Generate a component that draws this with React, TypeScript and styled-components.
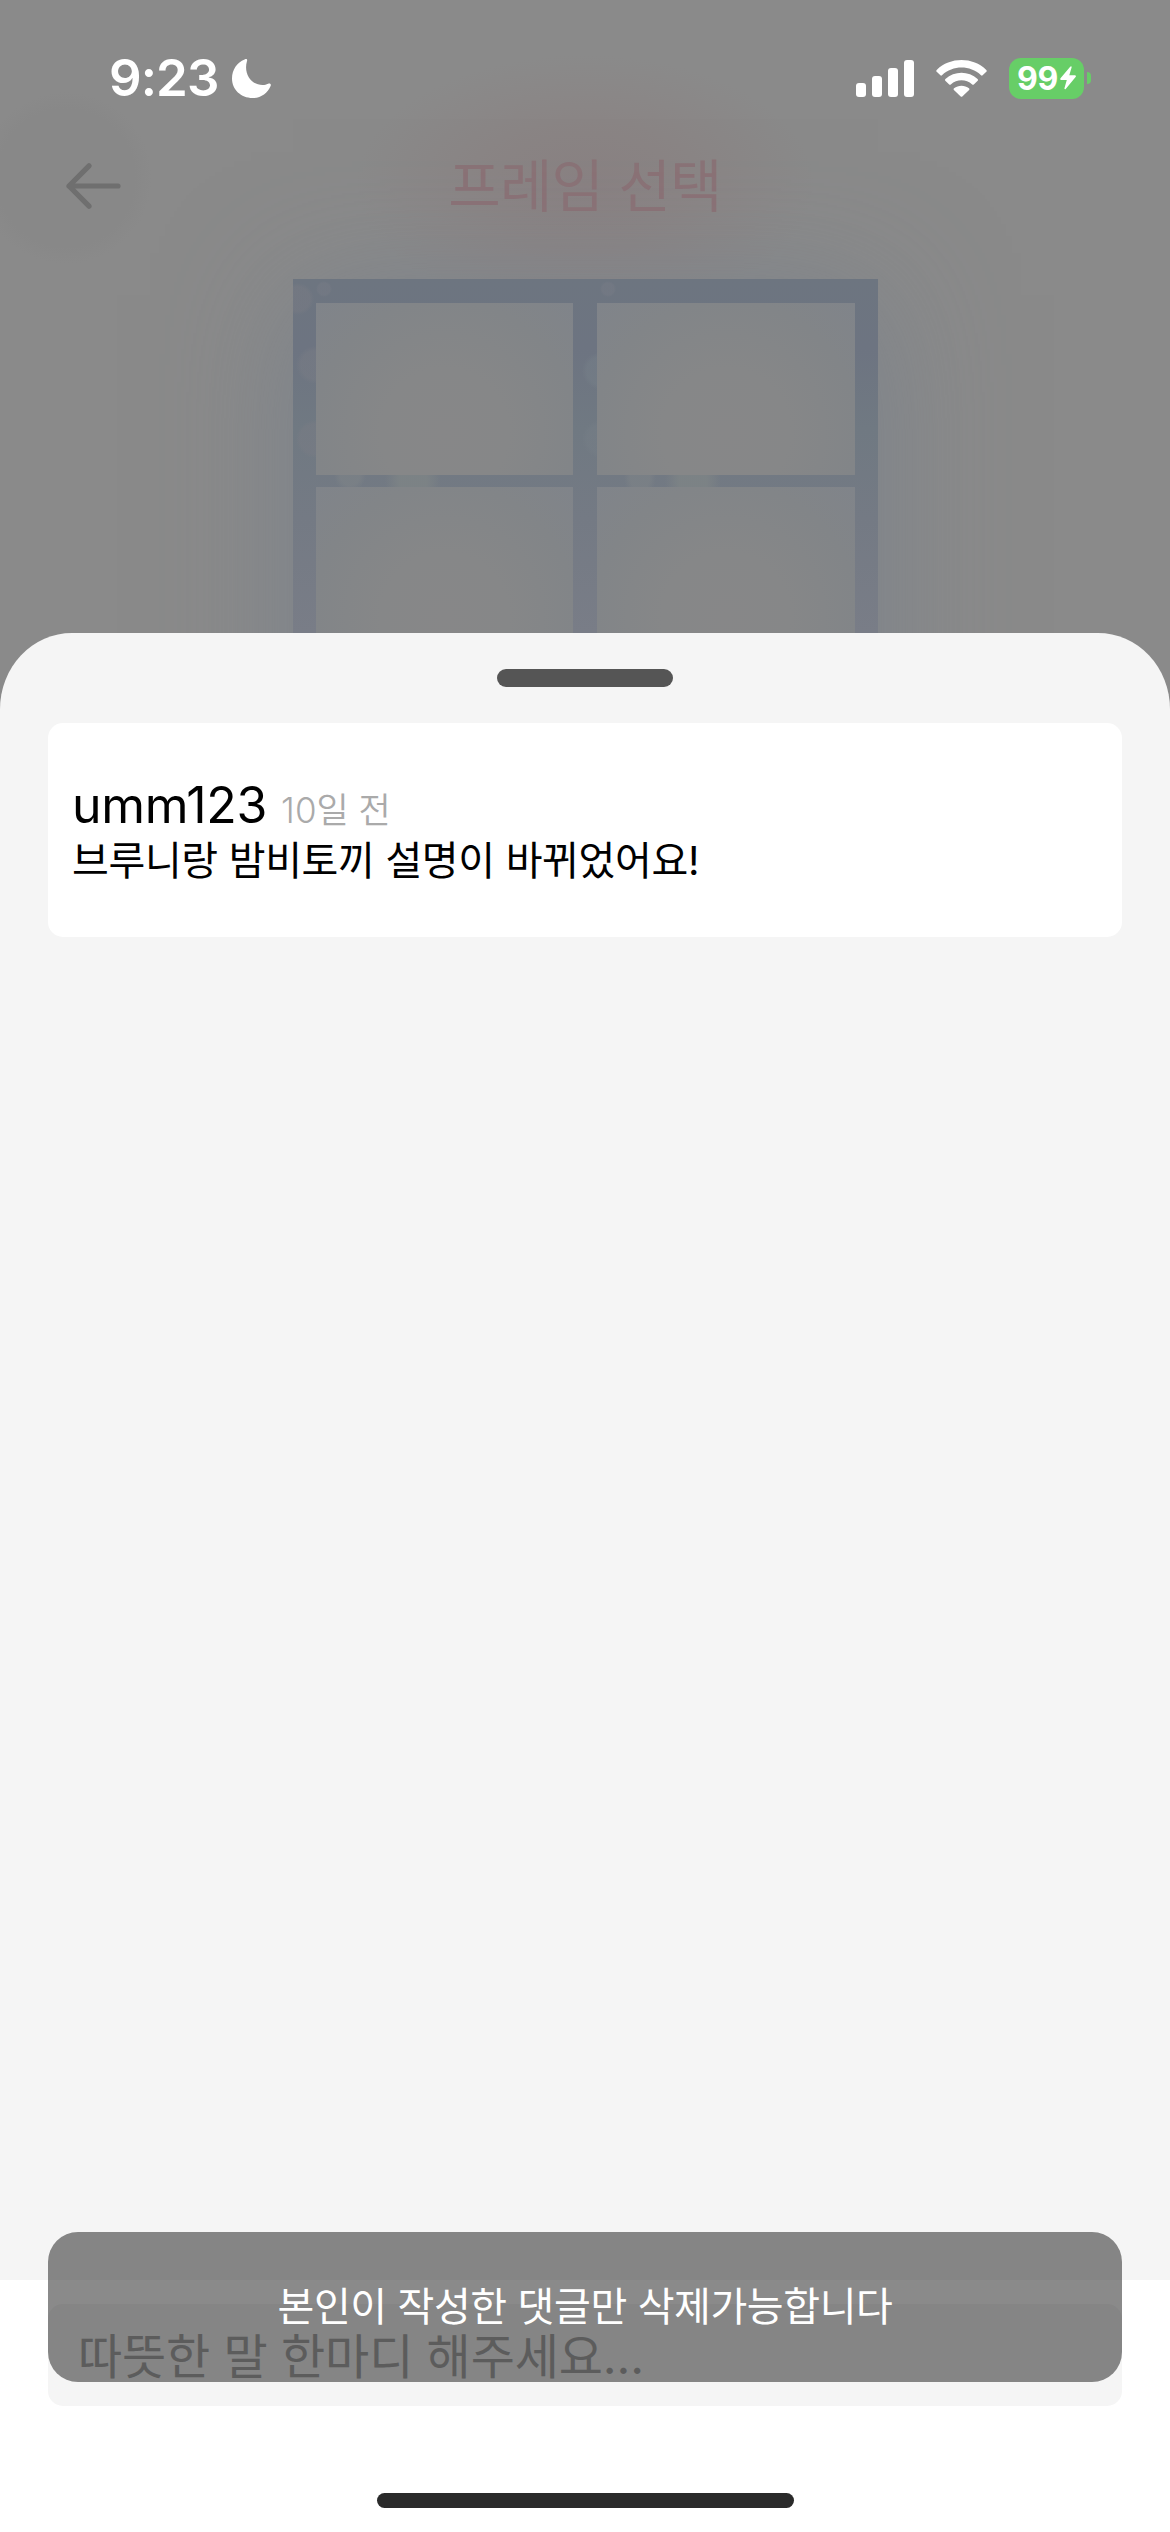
import React from "react";
import styled, { createGlobalStyle } from "styled-components";

const GlobalStyle = createGlobalStyle`
  *, *::before, *::after { box-sizing: border-box; }
  body {
    margin: 0;
    font-family: Inter, "Noto Sans CJK KR", sans-serif;
    background: #fff;
  }
`;

const Screen = styled.main`
  position: relative;
  display: flex;
  flex-direction: column;
  width: 1170px;
  height: 2532px;
  overflow: hidden;
  background: #fff;
`;

const Backdrop = styled.section`
  display: flex;
  flex-direction: column;
  flex: none;
  height: 733px;
  margin-bottom: -100px;
  overflow: hidden;
  background:
    radial-gradient(ellipse 230px 130px at 585px 185px, rgba(137, 128, 129, 0.9) 0, rgba(138, 130, 130, 0.7) 45%, rgba(138, 138, 138, 0) 100%),
    radial-gradient(circle 86px at 66px 178px, #888 0, #888 80%, rgba(138, 138, 138, 0) 100%),
    #8a8a8a;
`;

const StatusBar = styled.div`
  flex: none;
  display: flex;
  justify-content: space-between;
  align-items: center;
  height: 140px;
  padding: 16px 79px 0 109px;
  color: #fff;
`;

const StatusLeft = styled.div`
  display: flex;
  align-items: center;
  gap: 13px;
`;

const Clock = styled.span`
  font-size: 51px;
  line-height: 60px;
  font-weight: 600;
  letter-spacing: -0.9px;
`;

const StatusRight = styled.div`
  display: flex;
  align-items: center;
  gap: 22px;
`;

const Battery = styled.div`
  display: flex;
  align-items: center;
  gap: 3px;
`;

const BatteryBody = styled.div`
  display: flex;
  align-items: center;
  justify-content: center;
  gap: 2px;
  width: 75px;
  height: 41px;
  border-radius: 12px;
  background: #67ce67;
  font-size: 32px;
  line-height: 41px;
  font-weight: 700;
  letter-spacing: -0.4px;
`;

const BatteryTip = styled.div`
  width: 4px;
  height: 12px;
  border-radius: 0 6px 6px 0;
  background: #67ce67;
`;

const NavBar = styled.header`
  flex: none;
  display: grid;
  grid-template-columns: 120px 1fr 120px;
  align-items: center;
  height: 90px;
  padding: 2px 66px 0;
`;

const BackButton = styled.button`
  display: flex;
  padding: 0;
  border: 0;
  background: none;
`;

const Title = styled.h1`
  margin: 0;
  color: #8a7276;
  font-size: 57px;
  line-height: 85px;
  font-weight: 400;
  text-align: center;
  letter-spacing: -0.8px;
`;

const FramePreview = styled.div`
  flex: none;
  align-self: center;
  display: grid;
  grid-template-columns: 1fr 1fr;
  grid-auto-rows: 172px;
  gap: 12px 24px;
  width: 585px;
  height: 760px;
  margin-top: 49px;
  padding: 24px 23px;
  background:
    radial-gradient(circle at 5px 20px, rgba(122, 124, 132, 0.45) 12px, rgba(122, 124, 132, 0) 16px),
    radial-gradient(circle at 31px 10px, rgba(120, 124, 134, 0.45) 6px, rgba(120, 124, 134, 0) 8px),
    radial-gradient(circle at 315px 10px, rgba(120, 124, 134, 0.45) 6px, rgba(120, 124, 134, 0) 8px),
    radial-gradient(circle at 22px 86px, rgba(122, 125, 133, 0.45) 14px, rgba(122, 125, 133, 0) 19px),
    radial-gradient(circle at 22px 160px, rgba(122, 124, 132, 0.45) 15px, rgba(122, 124, 132, 0) 19px),
    radial-gradient(circle at 308px 92px, rgba(120, 130, 138, 0.4) 14px, rgba(120, 130, 138, 0) 19px),
    radial-gradient(circle at 308px 160px, rgba(120, 128, 136, 0.35) 14px, rgba(120, 128, 136, 0) 19px),
    radial-gradient(ellipse at 57px 196px, rgba(128, 133, 136, 0.5) 10px, rgba(128, 133, 136, 0) 16px),
    radial-gradient(ellipse at 120px 201px, rgba(127, 133, 134, 0.75) 14px, rgba(127, 133, 134, 0) 28px),
    radial-gradient(ellipse at 347px 196px, rgba(128, 133, 136, 0.5) 10px, rgba(128, 133, 136, 0) 16px),
    radial-gradient(ellipse at 400px 201px, rgba(127, 133, 134, 0.75) 14px, rgba(127, 133, 134, 0) 28px),
    linear-gradient(180deg, #6d7580 0, #6d7481 70px, #707982 150px, #747a84 240px, #797d87 354px, #797d87 100%);
  box-shadow: 0 16px 118px rgba(112, 124, 140, 0.55);
`;

const Pane = styled.div`
  background: radial-gradient(ellipse at 50% 75%, #878788 0, #868788 35%, #828588 72%, #80848a 100%);
`;

const Sheet = styled.section`
  flex: none;
  display: flex;
  flex-direction: column;
  align-items: center;
  height: 1647px;
  padding: 36px 48px 0;
  border-radius: 72px 72px 0 0 / 76px 76px 0 0;
  background: #f5f5f5;
`;

const Grabber = styled.div`
  flex: none;
  width: 176px;
  height: 18px;
  border-radius: 9px;
  background: #555;
`;

const CommentCard = styled.article`
  align-self: stretch;
  display: flex;
  flex-direction: column;
  height: 214px;
  margin-top: 36px;
  padding: 51px 24px 0;
  border-radius: 15px;
  background: #fff;
  color: #000;
`;

const CommentMeta = styled.div`
  display: flex;
  align-items: baseline;
  gap: 14px;
  height: 62px;
`;

const Author = styled.span`
  font-size: 50px;
  line-height: 62px;
  letter-spacing: -0.3px;
`;

const Age = styled.span`
  color: #aaa;
  font-size: 35px;
  line-height: 50px;
  font-weight: 350;
`;

const CommentText = styled.p`
  margin: 0;
  font-size: 40px;
  line-height: 50px;
  letter-spacing: -0.35px;
  white-space: nowrap;
`;

const Composer = styled.footer`
  flex: 1;
  display: flex;
  flex-direction: column;
  align-items: center;
  justify-content: space-between;
  padding: 24px 48px;
  background: #fff;
`;

const CommentField = styled.div`
  align-self: stretch;
  height: 102px;
  padding: 0 30px;
  border-radius: 15px;
  background: #f5f5f5;
  color: #aaa;
  font-size: 48px;
  line-height: 105px;
  letter-spacing: -0.1px;
`;

const HomeIndicator = styled.div`
  width: 417px;
  height: 15px;
  border-radius: 8px;
  background: #2a2a2a;
`;

const Toast = styled.div`
  position: absolute;
  left: 48px;
  right: 48px;
  bottom: 150px;
  height: 150px;
  border-radius: 30px;
  background: rgba(0, 0, 0, 0.46);
  color: #fff;
  font-size: 40px;
  line-height: 150px;
  letter-spacing: -0.4px;
  text-align: center;
`;

const Moon = () => (
  <svg width="39" height="39" viewBox="0 0 39 39" fill="#fff">
    <path d="M12.6.4C14.6-.5 15.6.3 15 2c-3.7 12.500 4 24 15.500 24 2.200 0 3.800-.4 5.600-1.200 1.900-.9 3.300.3 2.500 2.100C35.500 34.300 28.600 39 20.500 39 9 39 0 30.500 0 19.500 0 10.500 5 3.500 12.600.4Z" />
  </svg>
);

const Signal = () => (
  <svg width="58" height="37" viewBox="0 0 58 37" fill="#fff">
    <rect x="0" y="23" width="10" height="14" rx="3" />
    <rect x="16" y="16" width="10" height="21" rx="3" />
    <rect x="32" y="8" width="10" height="29" rx="3" />
    <rect x="48" y="0" width="10" height="37" rx="3" />
  </svg>
);

const Wifi = () => (
  <svg width="51" height="37" viewBox="0 0 51 37" fill="#fff">
    <path d="M.7 11.800Q-.2 10.900.7 9.900C14-3.300 37-3.300 50.300 9.900Q51.200 10.900 50.300 11.800L46.600 15.300Q45.900 16 45 15.200C34 5 17 5 6 15.200Q5.100 16 4.400 15.300Z" />
    <path d="M9.300 20.800Q8.500 19.900 9.400 19C18.500 10.700 32.500 10.700 41.600 19Q42.500 19.900 41.700 20.800L37.800 24.400Q37 25.100 36.200 24.400C30 18.900 21 18.900 14.800 24.400Q14 25.100 13.200 24.400Z" />
    <path d="M17.900 29.900Q17.200 29.100 18 28.300C22.300 24.900 28.700 24.900 33 28.300Q33.800 29.100 33.100 29.900L26.300 36.500Q25.500 37.200 24.700 36.500Z" />
  </svg>
);

const Bolt = () => (
  <svg width="16" height="24" viewBox="0 0 16 24" fill="#fff">
    <path d="M10.200.8C11-.3 11.900.3 11.600 1.500L9.300 9.300h5.600c1 0 1.300.9.700 1.700L5.900 22.800c-.8 1-1.700.4-1.400-.8l2.300-8H1.200c-1 0-1.300-.9-.7-1.700Z" />
  </svg>
);

const BackArrow = () => (
  <svg width="55" height="46" viewBox="0 0 55 46" fill="none" stroke="#6f6f6f" strokeWidth="5.200" strokeLinecap="round" strokeLinejoin="round">
    <path d="M23 2.800 3 23l20 20.200M3 23h49" />
  </svg>
);

export default function App() {
  return (
    <>
      <GlobalStyle />
      <Screen>
        <Backdrop>
          <StatusBar>
            <StatusLeft>
              <Clock>9:23</Clock>
              <Moon />
            </StatusLeft>
            <StatusRight>
              <Signal />
              <Wifi />
              <Battery>
                <BatteryBody>
                  99
                  <Bolt />
                </BatteryBody>
                <BatteryTip />
              </Battery>
            </StatusRight>
          </StatusBar>
          <NavBar>
            <BackButton aria-label="뒤로">
              <BackArrow />
            </BackButton>
            <Title>프레임 선택</Title>
          </NavBar>
          <FramePreview>
            {[0, 1, 2, 3].map((i) => (
              <Pane key={i} />
            ))}
          </FramePreview>
        </Backdrop>
        <Sheet>
          <Grabber />
          <CommentCard>
            <CommentMeta>
              <Author>umm123</Author>
              <Age>10일 전</Age>
            </CommentMeta>
            <CommentText>브루니랑 밤비토끼 설명이 바뀌었어요!</CommentText>
          </CommentCard>
        </Sheet>
        <Composer>
          <CommentField>따뜻한 말 한마디 해주세요...</CommentField>
          <HomeIndicator />
        </Composer>
        <Toast role="status">본인이 작성한 댓글만 삭제가능합니다</Toast>
      </Screen>
    </>
  );
}
